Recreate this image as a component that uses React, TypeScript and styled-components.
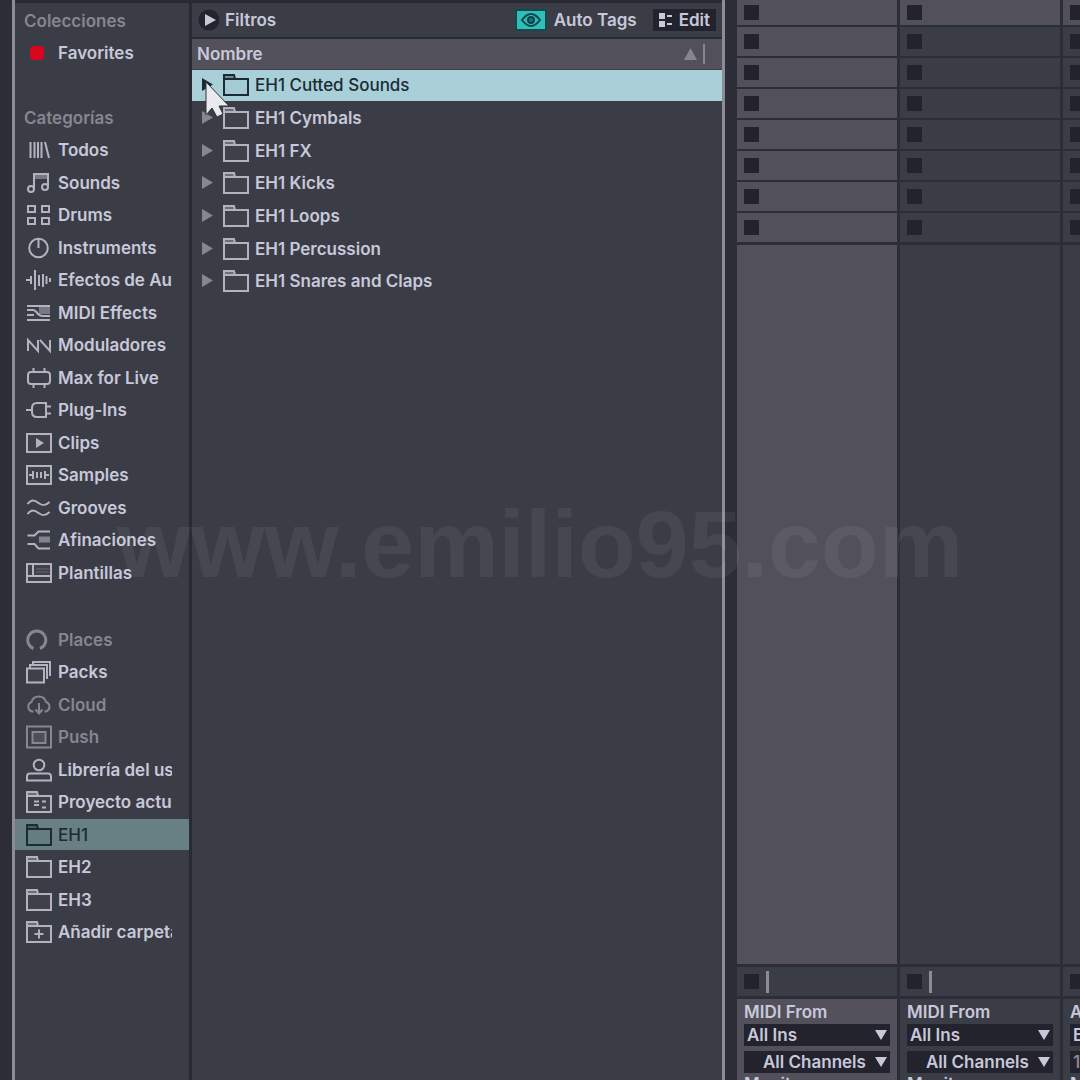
import React from "react";
import styled, { createGlobalStyle } from "styled-components";

const color = {
  frame: "#2d2d37",
  line: "#2a2a34",
  panel: "#3b3d46",
  raised: "#52515b",
  edge: "#8c8c97",
  text: "#c8c8da",
  dim: "#85868f",
  icon: "#b2b3bf",
  well: "#23232d",
  select: "#a9d0d8",
  selectDim: "#687f83",
  ink: "#1c2b33",
};

const GlobalStyle = createGlobalStyle`
  *, *::before, *::after { box-sizing: border-box; }
  body {
    margin: 0;
    background: ${color.frame};
    color: ${color.text};
    font-family: Inter, "Open Sans", "Liberation Sans", sans-serif;
    font-size: 17px;
    font-weight: 600;
    line-height: 24px;
  }
  button, select { font: inherit; color: inherit; border: 0; padding: 0; background: none; }
  ul { list-style: none; margin: 0; padding: 0; }
  h2 { font: inherit; margin: 0; }
  svg { display: block; flex: none; }
`;

const Screen = styled.div`
  position: relative;
  display: flex;
  height: 100vh;
  overflow: hidden;
`;

const Browser = styled.main`
  flex: 1;
  min-width: 0;
  display: flex;
  margin: 0 12px;
  border: solid ${color.edge};
  border-width: 0 3px;
  background: ${color.panel};
`;

const Sidebar = styled.nav`
  flex: none;
  width: 177px;
  padding-top: 1px;
  border-top: 3px solid ${color.line};
  border-right: 3px solid ${color.line};
`;

const Section = styled.ul`
  margin-bottom: 32px;
  &:nth-child(2) { margin-bottom: 34px; }
`;

const SideRow = styled.li`
  display: flex;
  align-items: center;
  height: 32px;
  &:nth-child(odd) { height: 33px; }
`;

const SideTitle = styled.h2`
  padding-left: 9px;
  color: ${color.dim};
`;

const SideLink = styled.a<{ $tone?: "dim" | "selected" }>`
  flex: 1;
  min-width: 0;
  display: flex;
  align-items: center;
  gap: 6px;
  height: 31px;
  padding: 0 17px 0 11px;
  text-decoration: none;
  color: ${(p) => (p.$tone === "dim" ? color.dim : p.$tone === "selected" ? color.ink : color.text)};
  background: ${(p) => (p.$tone === "selected" ? color.selectDim : "transparent")};
  font-weight: ${(p) => (p.$tone === "selected" ? 500 : 600)};
  & > svg {
    color: ${(p) => (p.$tone === "dim" ? color.dim : p.$tone === "selected" ? color.ink : color.icon)};
  }
`;

const SideLabel = styled.span`
  overflow: hidden;
  white-space: nowrap;
`;

const Content = styled.section`
  flex: 1;
  min-width: 0;
  border-top: 3px solid ${color.line};
`;

const Toolbar = styled.div`
  display: flex;
  align-items: center;
  height: 36px;
  padding: 0 6px;
  border-bottom: 2px solid ${color.line};
`;

const FilterButton = styled.button`
  display: flex;
  align-items: center;
  gap: 5px;
  margin-right: auto;
`;

const EyeButton = styled.button`
  display: grid;
  place-items: center;
  width: 32px;
  height: 22px;
  margin-right: 7px;
  background: #2dbfb8;
  border: 2px solid #17484d;
  color: #0e4449;
`;

const EditButton = styled.button`
  display: flex;
  align-items: center;
  gap: 6px;
  height: 22px;
  margin-left: 16px;
  padding: 0 6px;
  background: ${color.well};
`;

const ColumnHeader = styled.div`
  display: flex;
  align-items: center;
  justify-content: space-between;
  height: 30px;
  padding: 0 17px 0 5px;
  background: ${color.raised};
`;

const SortMark = styled.span`
  display: flex;
  align-items: center;
  gap: 6px;
  color: ${color.dim};
  &::after {
    content: "";
    width: 2px;
    height: 20px;
    background: currentColor;
  }
`;

const FileRow = styled.li`
  display: flex;
  align-items: flex-end;
  height: 33px;
  &:nth-child(3n + 1) { height: 32px; }
`;

const FileButton = styled.button<{ $selected: boolean }>`
  flex: 1;
  display: flex;
  align-items: center;
  height: 31px;
  padding: 0 0 2px 10px;
  text-align: left;
  color: ${(p) => (p.$selected ? color.ink : color.text)};
  background: ${(p) => (p.$selected ? color.select : "transparent")};
  font-weight: ${(p) => (p.$selected ? 500 : 600)};
  & > svg { margin-right: 6px; color: ${(p) => (p.$selected ? color.ink : color.icon)}; }
  & > svg:first-child { margin-right: 10px; color: ${(p) => (p.$selected ? color.ink : color.dim)}; }
`;

const Session = styled.section`
  flex: none;
  display: flex;
  gap: 3px;
  width: 343px;
  overflow: hidden;
`;

const TrackColumn = styled.div`
  flex: none;
  display: flex;
  flex-direction: column;
  width: 160px;
`;

const ClipSlot = styled.div<{ $raised: boolean }>`
  display: flex;
  align-items: center;
  height: 29px;
  margin-bottom: 2px;
  padding-left: 7px;
  background: ${(p) => (p.$raised ? color.raised : color.panel)};
  &:first-child { height: 25px; }
`;

const StopButton = styled.button`
  width: 15px;
  height: 15px;
  background: ${color.well};
`;

const TrackBody = styled.div<{ $raised: boolean }>`
  flex: 1;
  margin-top: 1px;
  background: ${(p) => (p.$raised ? color.raised : color.panel)};
`;

const StatusRow = styled.div`
  display: flex;
  align-items: center;
  gap: 7px;
  height: 29px;
  margin: 3px 0;
  padding-left: 7px;
  background: ${color.panel};
  &::after {
    content: "";
    width: 3px;
    height: 22px;
    background: ${color.edge};
  }
`;

const Routing = styled.div<{ $raised: boolean }>`
  height: 81px;
  padding: 1px 7px 0;
  overflow: hidden;
  background: ${(p) => (p.$raised ? color.raised : color.panel)};
`;

const RoutingLabel = styled.label`
  display: block;
`;

const MonitorLabel = styled.div`
  line-height: 12px;
`;

const SelectBox = styled.div<{ $dim?: boolean }>`
  display: grid;
  align-items: center;
  height: 22px;
  margin-bottom: 5px;
  background: ${color.well};
  color: ${(p) => (p.$dim ? color.dim : color.text)};
  & > * { grid-area: 1 / 1; }
  & > svg { justify-self: end; margin-right: 3px; pointer-events: none; }
`;

const Select = styled.select<{ $indent?: boolean }>`
  appearance: none;
  width: 100%;
  height: 22px;
  line-height: 22px;
  padding-left: ${(p) => (p.$indent ? 19 : 3)}px;
  border-radius: 0;
`;

const Watermark = styled.div`
  position: absolute;
  inset: 0;
  display: grid;
  place-items: center;
  padding-top: 8px;
  font: bold 95px/108px "Liberation Sans", Arial, sans-serif;
  color: rgba(255, 255, 255, 0.06);
  pointer-events: none;
`;

const Pointer = styled.svg`
  position: absolute;
  left: 204px;
  top: 79px;
  pointer-events: none;
`;

const FolderShape = () => (
  <>
    <path d="M1 6h24v16H1z" fill="currentColor" fillOpacity="0.03" />
    <path d="M1 6V2h10l1 4" fill="currentColor" fillOpacity="0.4" />
  </>
);

const glyphs: Record<string, React.ReactNode> = {
  favorites: <rect x="4" y="5" width="14" height="14" rx="4" fill="#d8061c" stroke="none" />,
  all: <path d="M4.5 4v16M8.5 4v16M12 4v16M15.5 4v16M19 4l4 16" />,
  sounds: (
    <>
      <path d="M8 3h14v5H8z" fill="currentColor" fillOpacity="0.5" stroke="none" />
      <path d="M8 18V3h14v13" />
      <circle cx="5" cy="18" r="3" />
      <circle cx="19" cy="16" r="3" />
    </>
  ),
  drums: <path d="M2 3h7v6H2zM16 3h7v6h-7zM2 15h7v6H2zM16 15h7v6h-7z" />,
  instruments: (
    <>
      <circle cx="12.5" cy="12" r="9.3" />
      <path d="M12.5 3v9" />
    </>
  ),
  audio: <path d="M0 12h4M5 8v8M9 2v20M13 7v11M17 6v13M20.5 8v8M24 10v4" />,
  midi: (
    <>
      <path d="M13 6h11v7H13z" fill="currentColor" fillOpacity="0.5" stroke="none" />
      <path d="M1 5h23M1 9h6c3 0 3 2 5 4s3 2 5 2h7M1 14h7M1 19h23" />
    </>
  ),
  modulators: <path d="M2 18V7l10 11V7M14 7l10 11V7" />,
  max: (
    <>
      <rect x="2" y="6" width="22" height="12" rx="3" />
      <path d="M7.5 2v4M18.5 2v4M7.5 18v4M18.5 18v4" />
    </>
  ),
  plug: <path d="M0 12h6M20 5h-9c-3 0-5 2-5 5v4c0 3 2 5 5 5h9zM20 8.5h5M20 15.5h5" />,
  clips: (
    <>
      <path d="M1 3h24v18H1z" fill="currentColor" fillOpacity="0.03" />
      <path d="M10 7v10l8-5z" fill="currentColor" stroke="none" />
    </>
  ),
  samples: (
    <>
      <path d="M1 3h24v18H1z" fill="currentColor" fillOpacity="0.03" />
      <path d="M3 12h3M7 8v8M11 9v6M15 9v6M19 8v8M20 12h3" />
    </>
  ),
  grooves: <path d="M1.5 8c4-5 7-4 11-1s7 3 11-1M1.5 18c4-5 7-4 11-1s7 3 11-1" />,
  tunings: (
    <>
      <path d="M13 8.5h11v6H13z" fill="currentColor" fillOpacity="0.6" stroke="none" />
      <path d="M1.5 7.5h7l4-4H24M1.5 16h7l4 4.5H24" />
    </>
  ),
  templates: (
    <>
      <path d="M1 3h24v18H1z" fill="currentColor" fillOpacity="0.03" />
      <path d="M7 4v11M1 15h24" />
      <path d="M10 8h13M10 11h13" strokeWidth="1" strokeOpacity="0.35" />
    </>
  ),
  places: <path d="M7.500 20.500A9 9 0 1 1 14 20.500" strokeWidth="3" />,
  packs: (
    <>
      <path d="M1 8.5h17v14H1z" fill="currentColor" fillOpacity="0.03" />
      <path d="M4 8V5h17v14M7 5V2h17v14" />
    </>
  ),
  cloud: <path d="M7.5 18.5H6a5 5 0 0 1-.5-9.5A7.5 7.5 0 0 1 20 9a5 5 0 0 1 0 9.5h-1.5M13 10v10M9.5 16.5l3.5 4 3.5-4" />,
  push: (
    <>
      <path d="M1 1.5h24v21H1z" />
      <path d="M6.5 7h13v11h-13z" fill="currentColor" fillOpacity="0.25" />
    </>
  ),
  user: (
    <>
      <circle cx="13" cy="7" r="5.3" />
      <path d="M1 22.5v-4q0-3 3-3h18q3 0 3 3v4z" />
    </>
  ),
  project: (
    <>
      <FolderShape />
      <path d="M8 11.5h5M8 15h5M16 11.5h4M16 17.5h4" />
    </>
  ),
  folder: <FolderShape />,
  add: (
    <>
      <FolderShape />
      <path d="M13 9.5v9M8.5 14h9" />
    </>
  ),
};

const Icon = ({ name }: { name: string }) => (
  <svg width="26" height="24" viewBox="0 0 26 24" fill="none" stroke="currentColor" strokeWidth="2" aria-hidden="true">
    {glyphs[name]}
  </svg>
);

const Arrow = () => (
  <svg width="12" height="10" viewBox="0 0 12 10" aria-hidden="true">
    <path d="M0 0h12L6 10z" fill="currentColor" />
  </svg>
);

type Item = { label: string; icon: string; tone?: "dim" | "selected" };

const sections: { title?: string; items: Item[] }[] = [
  { title: "Colecciones", items: [{ label: "Favorites", icon: "favorites" }] },
  {
    title: "Categorías",
    items: [
      { label: "Todos", icon: "all" },
      { label: "Sounds", icon: "sounds" },
      { label: "Drums", icon: "drums" },
      { label: "Instruments", icon: "instruments" },
      { label: "Efectos de Audio", icon: "audio" },
      { label: "MIDI Effects", icon: "midi" },
      { label: "Moduladores", icon: "modulators" },
      { label: "Max for Live", icon: "max" },
      { label: "Plug-Ins", icon: "plug" },
      { label: "Clips", icon: "clips" },
      { label: "Samples", icon: "samples" },
      { label: "Grooves", icon: "grooves" },
      { label: "Afinaciones", icon: "tunings" },
      { label: "Plantillas", icon: "templates" },
    ],
  },
  {
    items: [
      { label: "Places", icon: "places", tone: "dim" },
      { label: "Packs", icon: "packs" },
      { label: "Cloud", icon: "cloud", tone: "dim" },
      { label: "Push", icon: "push", tone: "dim" },
      { label: "Librería del usuario", icon: "user" },
      { label: "Proyecto actual", icon: "project" },
      { label: "EH1", icon: "folder", tone: "selected" },
      { label: "EH2", icon: "folder" },
      { label: "EH3", icon: "folder" },
      { label: "Añadir carpeta", icon: "add" },
    ],
  },
];

const files = ["Cutted Sounds", "Cymbals", "FX", "Kicks", "Loops", "Percussion", "Snares and Claps"];

const tracks = [
  { from: "MIDI From", input: "All Ins", channel: "All Channels", raised: true, midi: true },
  { from: "MIDI From", input: "All Ins", channel: "All Channels", raised: false, midi: true },
  { from: "Audio From", input: "Ext. In", channel: "1", raised: false, midi: false },
];

export default function App() {
  return (
    <>
      <GlobalStyle />
      <Screen>
        <Browser>
          <Sidebar>
            {sections.map((section, i) => (
              <Section key={i}>
                {section.title && (
                  <SideRow>
                    <SideTitle>{section.title}</SideTitle>
                  </SideRow>
                )}
                {section.items.map((item) => (
                  <SideRow key={item.label}>
                    <SideLink href="#" $tone={item.tone}>
                      <Icon name={item.icon} />
                      <SideLabel>{item.label}</SideLabel>
                    </SideLink>
                  </SideRow>
                ))}
              </Section>
            ))}
          </Sidebar>
          <Content>
            <Toolbar>
              <FilterButton>
                <svg width="22" height="22" viewBox="0 0 22 22" aria-hidden="true">
                  <circle cx="11" cy="11" r="10.5" fill={color.well} />
                  <path d="M7 5v12l11-6z" fill={color.text} />
                </svg>
                Filtros
              </FilterButton>
              <EyeButton id="auto-tags" aria-label="Auto Tags">
                <svg width="22" height="16" viewBox="0 0 22 16" fill="none" stroke="currentColor" strokeWidth="2" aria-hidden="true">
                  <path d="M2 8q9-12 18 0q-9 12-18 0z" />
                  <circle cx="11" cy="8" r="3" fill="currentColor" fillOpacity="0.6" />
                </svg>
              </EyeButton>
              <label htmlFor="auto-tags">Auto Tags</label>
              <EditButton>
                <svg width="14" height="14" viewBox="0 0 14 14" fill="currentColor" aria-hidden="true">
                  <path d="M0 0h6v6H0zM0 8h6v6H0zM8 2h5v2H8zM8 10h5v2H8z" />
                </svg>
                Edit
              </EditButton>
            </Toolbar>
            <ColumnHeader>
              <button>Nombre</button>
              <SortMark>
                <svg width="13" height="12" viewBox="0 0 13 12" aria-hidden="true">
                  <path d="M6.5 0L13 12H0z" fill="currentColor" />
                </svg>
              </SortMark>
            </ColumnHeader>
            <ul>
              {files.map((name, i) => (
                <FileRow key={name}>
                  <FileButton $selected={i === 0}>
                    <svg width="11" height="13" viewBox="0 0 11 13" aria-hidden="true">
                      <path d="M0 0v13l11-6.5z" fill="currentColor" />
                    </svg>
                    <Icon name="folder" />
                    EH1 {name}
                  </FileButton>
                </FileRow>
              ))}
            </ul>
          </Content>
        </Browser>
        <Session>
          {tracks.map((track, t) => (
            <TrackColumn key={t}>
              {Array.from({ length: 8 }, (_, row) => (
                <ClipSlot key={row} $raised={track.raised || row === 0}>
                  <StopButton aria-label="Stop" />
                </ClipSlot>
              ))}
              <TrackBody $raised={track.raised} />
              <StatusRow>
                <StopButton aria-label="Stop" />
              </StatusRow>
              <Routing $raised={track.raised}>
                <RoutingLabel htmlFor={`input-${t}`}>{track.from}</RoutingLabel>
                <SelectBox>
                  <Select id={`input-${t}`}>
                    <option>{track.input}</option>
                  </Select>
                  <Arrow />
                </SelectBox>
                <SelectBox $dim={!track.midi}>
                  <Select $indent={track.midi} aria-label="Channel">
                    <option>{track.channel}</option>
                  </Select>
                  <Arrow />
                </SelectBox>
                <MonitorLabel>Monitor</MonitorLabel>
              </Routing>
            </TrackColumn>
          ))}
        </Session>
        <Watermark aria-hidden="true">www.emilio95.com</Watermark>
        <Pointer width="28" height="40" viewBox="0 0 28 40" aria-hidden="true">
          <path
            d="M2 3v33l6-7 5 9 6-3-4-8h10z"
            fill="#e9e9ee"
            stroke="#33343d"
            strokeWidth="1"
            strokeLinejoin="round"
          />
        </Pointer>
      </Screen>
    </>
  );
}
